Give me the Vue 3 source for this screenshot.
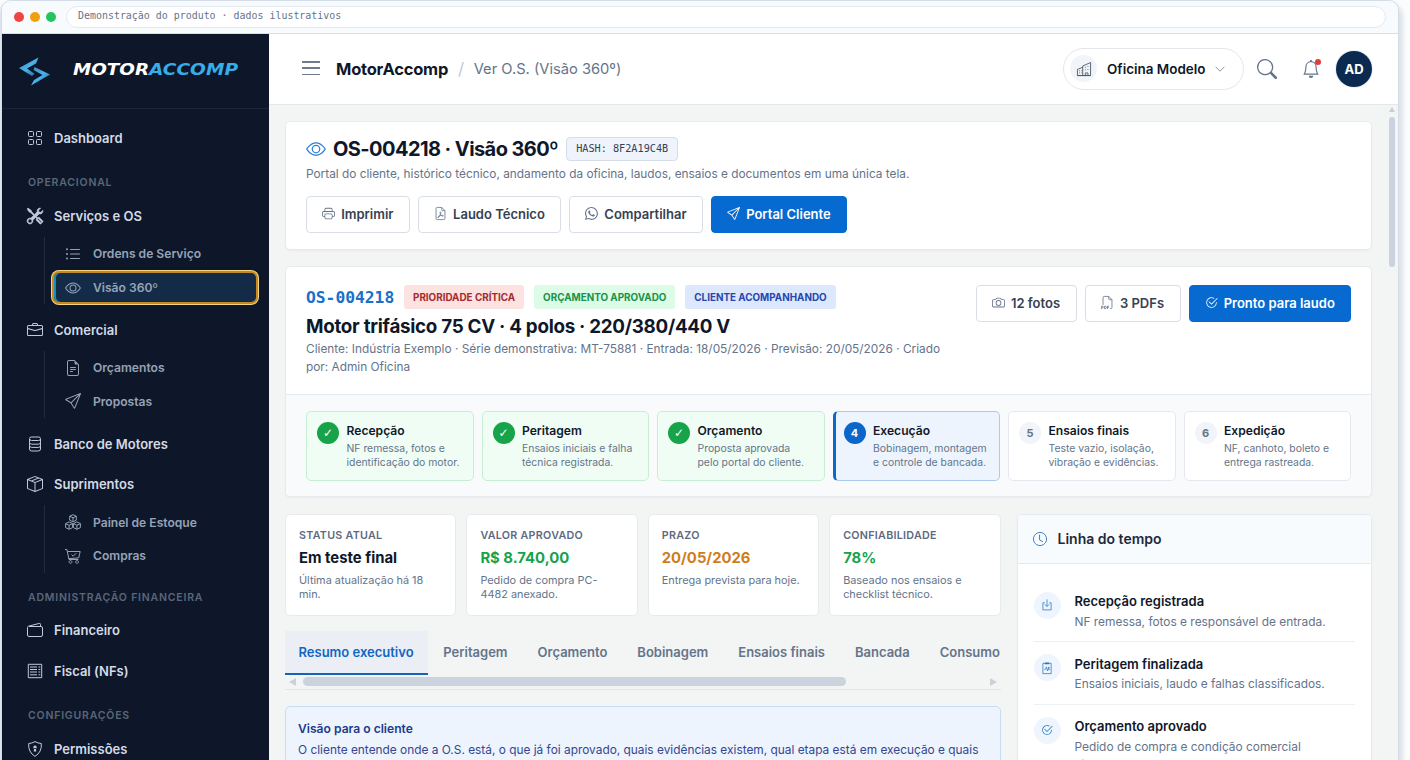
<script setup>
import { h } from 'vue'

const icons = {
  eye: { f: 'M16 8s-3-5.5-8-5.5S0 8 0 8s3 5.5 8 5.5S16 8 16 8M1.173 8a13 13 0 0 1 1.66-2.043C4.12 4.668 5.88 3.5 8 3.5s3.879 1.168 5.168 2.457A13 13 0 0 1 14.828 8q-.086.13-.195.288c-.335.48-.83 1.12-1.465 1.755C11.879 11.332 10.119 12.5 8 12.5s-3.879-1.168-5.168-2.457A13 13 0 0 1 1.172 8zM8 5.5a2.5 2.5 0 1 0 0 5 2.5 2.5 0 0 0 0-5M4.5 8a3.5 3.5 0 1 1 7 0 3.5 3.5 0 0 1-7 0' },
  grid: { s: 'M2.5 1.5h3a1 1 0 0 1 1 1v3a1 1 0 0 1-1 1h-3a1 1 0 0 1-1-1v-3a1 1 0 0 1 1-1zM10.500 1.500h3a1 1 0 0 1 1 1v3a1 1 0 0 1-1 1h-3a1 1 0 0 1-1-1v-3a1 1 0 0 1 1-1zM2.500 9.500h3a1 1 0 0 1 1 1v3a1 1 0 0 1-1 1h-3a1 1 0 0 1-1-1v-3a1 1 0 0 1 1-1zM10.500 9.500h3a1 1 0 0 1 1 1v3a1 1 0 0 1-1 1h-3a1 1 0 0 1-1-1v-3a1 1 0 0 1 1-1z' },
  tools: { f: 'M1 0 0 1l2.2 3.081a1 1 0 0 0 .815.419h.07a1 1 0 0 1 .708.293l2.675 2.675-2.617 2.654A3.003 3.003 0 0 0 0 13a3 3 0 1 0 5.878-.851l2.654-2.617.968.968-.305.914a1 1 0 0 0 .242 1.023l3.27 3.27a.997.997 0 0 0 1.414 0l1.586-1.586a.997.997 0 0 0 0-1.414l-3.27-3.27a1 1 0 0 0-1.023-.242L10.5 9.5l-.96-.96 2.68-2.643A3.005 3.005 0 0 0 16 3q0-.405-.102-.777l-2.14 2.141L12 4l-.364-1.757L13.777.102a3 3 0 0 0-3.675 3.68L7.462 6.46 4.793 3.793a1 1 0 0 1-.293-.707v-.071a1 1 0 0 0-.419-.814zm9.646 10.646a.5.5 0 0 1 .708 0l2.914 2.915a.5.5 0 0 1-.707.707l-2.915-2.914a.5.5 0 0 1 0-.708M3 11l.471.242.529.026.287.445.445.287.026.529L5 13l-.242.471-.026.529-.445.287-.287.445-.529.026L3 15l-.471-.242L2 14.732l-.287-.445L1.268 14l-.026-.529L1 13l.242-.471.026-.529.445-.287.287-.445.529-.026z', w: 0.5 },
  list: { f: 'M5 12.5a.5.5 0 0 1 .5-.5h9a.5.5 0 0 1 0 1h-9a.5.5 0 0 1-.5-.5m0-4.500a.5.5 0 0 1 .5-.5h9a.5.5 0 0 1 0 1h-9a.5.5 0 0 1-.5-.5m0-4.500a.5.5 0 0 1 .5-.5h9a.5.5 0 0 1 0 1h-9a.5.5 0 0 1-.5-.5m-3 .8a1 1 0 1 0 0-2 1 1 0 0 0 0 2m0 4.600a1 1 0 1 0 0-2 1 1 0 0 0 0 2m0 4.600a1 1 0 1 0 0-2 1 1 0 0 0 0 2' },
  briefcase: { f: 'M6.5 1A1.5 1.5 0 0 0 5 2.5V3H1.5A1.5 1.5 0 0 0 0 4.5v8A1.5 1.5 0 0 0 1.5 14h13a1.5 1.5 0 0 0 1.5-1.5v-8A1.5 1.5 0 0 0 14.5 3H11v-.5A1.5 1.5 0 0 0 9.5 1zm0 1h3a.5.5 0 0 1 .5.5V3H6v-.5a.5.5 0 0 1 .5-.5m1.886 6.914L15 7.151V12.5a.5.5 0 0 1-.5.5h-13a.5.5 0 0 1-.5-.5V7.15l6.614 1.764a1.5 1.5 0 0 0 .772 0M1.5 4h13a.5.5 0 0 1 .5.5v1.616L8.129 7.948a.5.5 0 0 1-.258 0L1 6.116V4.5a.5.5 0 0 1 .5-.5' },
  doc: { f: 'M5.5 7a.5.5 0 0 0 0 1h5a.5.5 0 0 0 0-1zM5 9.5a.5.5 0 0 1 .5-.5h5a.5.5 0 0 1 0 1h-5a.5.5 0 0 1-.5-.5m0 2a.5.5 0 0 1 .5-.5h2a.5.5 0 0 1 0 1h-2a.5.5 0 0 1-.5-.5M9.5 0H4a2 2 0 0 0-2 2v12a2 2 0 0 0 2 2h8a2 2 0 0 0 2-2V4.5zm0 1v2A1.5 1.5 0 0 0 11 4.5h2V14a1 1 0 0 1-1 1H4a1 1 0 0 1-1-1V2a1 1 0 0 1 1-1z' },
  send: { f: 'M15.854.146a.5.5 0 0 1 .11.54l-5.819 14.547a.75.75 0 0 1-1.329.124l-3.178-4.995L.643 7.184a.75.75 0 0 1 .124-1.33L15.314.037a.5.5 0 0 1 .54.11ZM6.636 10.07l2.761 4.338L14.13 2.576zm6.787-8.201L1.591 6.602l4.339 2.76z' },
  database: { s: 'M4.500 1h7q2 0 2 1.400v.4q0 1.700-2 1.700h-7q-2 0-2-1.700v-.4q0-1.400 2-1.400zM2.500 3v3.300q0 1.900 2.200 1.900h6.600q2.200 0 2.200-1.900V3M2.500 6.300v3.200q0 1.900 2.200 1.900h6.600q2.200 0 2.200-1.900v-3.200M2.500 9.500v3.500q0 2 2.200 2h6.600q2.200 0 2.200-2v-3.500' },
  box: { f: 'M8.186 1.113a.5.5 0 0 0-.372 0L1.846 3.5l2.404.961L10.404 2zm3.564 1.426L5.596 5 8 5.961 14.154 3.5zm3.25 1.7-6.5 2.6v7.922l6.5-2.6V4.24zM7.5 14.762V6.838L1 4.239v7.923zM7.443.184a1.5 1.5 0 0 1 1.114 0l7.129 2.852A.5.5 0 0 1 16 3.5v8.662a1 1 0 0 1-.629.928l-7.185 2.874a.5.5 0 0 1-.372 0L.63 13.09a1 1 0 0 1-.63-.928V3.5a.5.5 0 0 1 .314-.464z' },
  boxes: { s: 'M8 .7l3.300 1.500v4L8 7.900 4.700 6.200v-4zM4.700 2.200 8 3.800l3.300-1.600M8 3.800v4M4.100 7.900l3.500 1.700v4l-3.500 1.700-3.500-1.700v-4zM.6 9.600l3.500 1.700 3.500-1.700M4.100 11.300v4M11.900 7.900l3.500 1.700v4l-3.500 1.700-3.500-1.700v-4zM8.400 9.600l3.500 1.700 3.500-1.700M11.900 11.300v4' },
  cart: { s: 'M0 1.500h1.900l2.100 10h9.300M2.600 3.500h12.600l-1.500 6.400-10 .7M6.500 6.500l1.700 1.700 3-3M5.500 12.500a1.400 1.400 0 1 0 .01 0zM12 12.500a1.400 1.400 0 1 0 .01 0z' },
  wallet: { s: 'M2 4.500h12a1.500 1.500 0 0 1 1.500 1.500v7a1.500 1.500 0 0 1-1.500 1.500H2A1.500 1.500 0 0 1 .5 13V5.500q0-1 1-1.300L12.300 1.400q1.200-.2 1.200 1v2' },
  fiscal: { s: 'M1.300 1.300h13.400v13.400H1.300zM3 4h7M3 6.500h7M3 9h7M3 11.800h7M11.500 4h1.800M11.500 6.500h1.800M11.500 9h1.800M11.500 11.800h1.800' },
  shield: { s: 'M8 .6q3 1.700 6.300 1.900.8 8.500-6.300 12.900Q.9 11 1.700 2.500 5 2.300 8 .6z', d: 'M8 4.600a1.700 1.700 0 1 0 .01 0zM7.200 7h1.600l.5 3.500H6.700z' },
  printer: { f: 'M2.5 8a.5.5 0 1 0 0-1 .5.5 0 0 0 0 1M5 1a2 2 0 0 0-2 2v2H2a2 2 0 0 0-2 2v3a2 2 0 0 0 2 2h1v1a2 2 0 0 0 2 2h6a2 2 0 0 0 2-2v-1h1a2 2 0 0 0 2-2V7a2 2 0 0 0-2-2h-1V3a2 2 0 0 0-2-2zM4 3a1 1 0 0 1 1-1h6a1 1 0 0 1 1 1v2H4zm1 5a2 2 0 0 0-2 2v1H2a1 1 0 0 1-1-1V7a1 1 0 0 1 1-1h12a1 1 0 0 1 1 1v3a1 1 0 0 1-1 1h-1v-1a2 2 0 0 0-2-2zm7 2v3a1 1 0 0 1-1 1H5a1 1 0 0 1-1-1v-3a1 1 0 0 1 1-1h6a1 1 0 0 1 1 1' },
  pdf: { s: 'M9.500.5H4A1.500 1.500 0 0 0 2.500 2v12A1.500 1.500 0 0 0 4 15.500h8a1.500 1.500 0 0 0 1.500-1.500V4.500zv3a1 1 0 0 0 1 1h3M8 6c-1 0-.5 2 .2 3.300.8 1.400 2.500 2.500 3.200 1.800.5-.9-2.400-1-4.400-.3-1.700.6-2.900 1.900-2.200 2.300.9.300 2.200-2 2.900-3.800C8.300 7.800 8.700 6 8 6z' },
  whatsapp: { f: 'M13.601 2.326A7.85 7.85 0 0 0 7.994 0C3.627 0 .068 3.558.064 7.926c0 1.399.366 2.76 1.057 3.965L0 16l4.204-1.102a7.9 7.9 0 0 0 3.79.965h.004c4.368 0 7.926-3.558 7.93-7.93A7.9 7.9 0 0 0 13.6 2.326zM7.994 14.521a6.6 6.6 0 0 1-3.356-.92l-.24-.144-2.494.654.666-2.433-.156-.251a6.56 6.56 0 0 1-1.007-3.505c0-3.626 2.957-6.584 6.591-6.584a6.56 6.56 0 0 1 4.66 1.931 6.56 6.56 0 0 1 1.928 4.66c-.004 3.639-2.961 6.592-6.592 6.592m3.615-4.934c-.197-.099-1.17-.578-1.353-.646-.182-.065-.315-.099-.445.099-.133.197-.513.646-.627.775-.114.133-.232.148-.43.05-.197-.1-.836-.308-1.592-.985-.59-.525-.985-1.175-1.103-1.372-.114-.198-.011-.304.088-.403.087-.088.197-.232.296-.346.1-.114.133-.198.198-.33.065-.134.034-.248-.015-.347-.05-.099-.445-1.076-.612-1.47-.16-.389-.323-.335-.445-.34-.114-.007-.247-.007-.38-.007a.73.73 0 0 0-.529.247c-.182.198-.691.677-.691 1.654s.71 1.916.81 2.049c.098.133 1.394 2.132 3.383 2.992.47.205.84.326 1.129.418.475.152.904.129 1.246.08.38-.058 1.171-.48 1.338-.943.164-.464.164-.86.114-.994-.05-.133-.182-.198-.38-.297' },
  camera: { f: 'M15 12a1 1 0 0 1-1 1H2a1 1 0 0 1-1-1V6a1 1 0 0 1 1-1h1.172a3 3 0 0 0 2.12-.879l.83-.828A1 1 0 0 1 6.827 3h2.344a1 1 0 0 1 .707.293l.828.828A3 3 0 0 0 12.828 5H14a1 1 0 0 1 1 1zM2 4a2 2 0 0 0-2 2v6a2 2 0 0 0 2 2h12a2 2 0 0 0 2-2V6a2 2 0 0 0-2-2h-1.172a2 2 0 0 1-1.414-.586l-.828-.828A2 2 0 0 0 9.172 2H6.828a2 2 0 0 0-1.414.586l-.828.828A2 2 0 0 1 3.172 4zM8 11a2.5 2.5 0 1 1 0-5 2.5 2.5 0 0 1 0 5m0 1a3.5 3.5 0 1 0 0-7 3.5 3.5 0 0 0 0 7M3 6.5a.5.5 0 1 1-1 0 .5.5 0 0 1 1 0' },
  filepdf: { s: 'M2.500 11V2A1.500 1.500 0 0 1 4 .5h5.500l4 4V14a1.500 1.500 0 0 1-1.500 1.500h-1M9.500.5v3a1 1 0 0 0 1 1h3M.8 16v-3.500h1a1 1 0 0 1 0 2.100h-1M4.400 12.500v3.100h.6a1.500 1.500 0 0 0 0-3.100zM8 16v-3.500h2M8 14.200h1.700' },
  check: { f: 'M2.5 8a5.5 5.5 0 0 1 8.25-4.764.5.5 0 0 0 .5-.866A6.5 6.5 0 1 0 14.5 8a.5.5 0 0 0-1 0 5.5 5.5 0 1 1-11 0M15.354 3.354a.5.5 0 0 0-.708-.708L8 9.293 5.354 6.646a.5.5 0 1 0-.708.708l3 3a.5.5 0 0 0 .708 0z' },
  clock: { s: 'M8 .5a7.500 7.500 0 1 0 .01 0zM7.500 3v6l3.800 2.200' },
  inbox: { s: 'M5 5H2.500v9.500h11V5H11M8 .5v9.500M5 7l3 3 3-3' },
  pulse: { s: 'M5 1.800H2.500v13.700h11V1.800H11M4.500 10h1.300l1.400-3.500 1.600 5.500 1.700-5.500v3.500h1', d: 'M5 .5h6v2.600H5z' },
  buildings: { s: 'M6.500 15.500V4.600l9-4v14.900H.5V8.400l6-2.300M.5 15.500h15M9.500 15.500v-3h3v3M9 6h1M12 5h1M9 9h1M12 8.500h1M2.500 10h1M2.500 12.500h1M4.700 10h.6M4.700 12.500h.6' },
  chevron: { s: 'M1 4.500l7 7 7-7' },
  search: { f: 'M11.742 10.344a6.5 6.5 0 1 0-1.397 1.398h-.001q.044.06.098.115l3.85 3.85a1 1 0 0 0 1.415-1.414l-3.85-3.85a1 1 0 0 0-.115-.1zM12 6.5a5.5 5.5 0 1 1-11 0 5.5 5.5 0 0 1 11 0' },
  bell: { f: 'M8 16a2 2 0 0 0 2-2H6a2 2 0 0 0 2 2M8 1.918l-.797.161A4 4 0 0 0 4 6c0 .628-.134 2.197-.459 3.742-.16.767-.376 1.566-.663 2.258h10.244c-.287-.692-.502-1.49-.663-2.258C12.134 8.197 12 6.628 12 6a4 4 0 0 0-3.203-3.92zM14.22 12c.223.447.481.801.78 1H1c.299-.199.557-.553.78-1C2.68 10.2 3 6.88 3 6c0-2.42 1.72-4.44 4.005-4.901a1 1 0 1 1 1.99 0A5 5 0 0 1 13 6c0 .88.32 4.2 1.22 6' },
}

const Icon = (props) => {
  const i = icons[props.name]
  return h('svg', { viewBox: '0 0 16 16', width: props.size || 16, height: props.size || 16, overflow: 'visible' }, [
    i.f && h('path', { d: i.f, fill: 'currentColor', stroke: i.w ? 'currentColor' : 'none', 'stroke-width': i.w || 0 }),
    i.s && h('path', { d: i.s, fill: 'none', stroke: 'currentColor', 'stroke-width': 1 }),
    i.d && h('path', { d: i.d, fill: 'currentColor' }),
  ])
}
Icon.props = ['name', 'size']

const menu = [
  { icon: 'grid', label: 'Dashboard' },
  { heading: 'Operacional' },
  { icon: 'tools', label: 'Serviços e OS', subs: [{ icon: 'list', label: 'Ordens de Serviço' }, { icon: 'eye', label: 'Visão 360º', active: true }] },
  { icon: 'briefcase', label: 'Comercial', subs: [{ icon: 'doc', label: 'Orçamentos' }, { icon: 'send', label: 'Propostas' }] },
  { icon: 'database', label: 'Banco de Motores' },
  { icon: 'box', label: 'Suprimentos', last: true, subs: [{ icon: 'boxes', label: 'Painel de Estoque' }, { icon: 'cart', label: 'Compras' }] },
  { heading: 'Administração Financeira' },
  { icon: 'wallet', label: 'Financeiro' },
  { icon: 'fiscal', label: 'Fiscal (NFs)' },
  { heading: 'Configurações' },
  { icon: 'shield', label: 'Permissões' },
]
const stages = [
  { t: 'Recepção', a: 'NF remessa, fotos e', b: 'identificação do motor.', s: 'done' },
  { t: 'Peritagem', a: 'Ensaios iniciais e falha', b: 'técnica registrada.', s: 'done' },
  { t: 'Orçamento', a: 'Proposta aprovada', b: 'pelo portal do cliente.', s: 'done' },
  { t: 'Execução', a: 'Bobinagem, montagem', b: 'e controle de bancada.', s: 'current' },
  { t: 'Ensaios finais', a: 'Teste vazio, isolação,', b: 'vibração e evidências.', s: 'todo' },
  { t: 'Expedição', a: 'NF, canhoto, boleto e', b: 'entrega rastreada.', s: 'todo' },
]
const kpis = [
  { l: 'Status atual', v: 'Em teste final', n: 'Última atualização há 18 min.', c: 'dark' },
  { l: 'Valor aprovado', v: 'R$ 8.740,00', n: 'Pedido de compra PC-4482 anexado.', c: 'green' },
  { l: 'Prazo', v: '20/05/2026', n: 'Entrega prevista para hoje.', c: 'orange' },
  { l: 'Confiabilidade', v: '78%', n: 'Baseado nos ensaios e checklist técnico.', c: 'green' },
]
const tabs = ['Resumo executivo', 'Peritagem', 'Orçamento', 'Bobinagem', 'Ensaios finais', 'Bancada', 'Consumo']
const timeline = [
  { icon: 'inbox', t: 'Recepção registrada', n: 'NF remessa, fotos e responsável de entrada.' },
  { icon: 'pulse', t: 'Peritagem finalizada', n: 'Ensaios iniciais, laudo e falhas classificados.' },
  { icon: 'check', t: 'Orçamento aprovado', n: 'Pedido de compra e condição comercial vinculados.' },
]
</script>

<template>
  <div class="stage">
    <div class="window">
      <div class="chrome">
        <i class="dot red"></i><i class="dot amber"></i><i class="dot lime"></i>
        <div class="address">Demonstração do produto · dados ilustrativos</div>
      </div>
      <div class="body">
        <aside class="sidebar">
          <div class="brand">
            <svg class="mark" width="32" height="29" viewBox="0 0 32 29">
              <defs>
                <linearGradient id="lg" x1="0" y1="0" x2="1" y2="1"><stop offset="0" stop-color="#3d83a8" /><stop offset=".5" stop-color="#48b4ec" /><stop offset="1" stop-color="#28648d" /></linearGradient>
              </defs>
              <path d="M19.500.5 0 11l13 8 2.500-2.200-7.500-5.300 9-5z" fill="url(#lg)" />
              <path d="M12 28.500 31 17.500 15.500 10l-1 3 9 5-8.500 5z" fill="url(#lg)" />
            </svg>
            <svg class="word" width="168" height="18" viewBox="0 0 168 18">
              <text x="1" y="15" textLength="76" lengthAdjust="spacingAndGlyphs" fill="#fff">MOTOR</text>
              <text x="77" y="15" textLength="89" lengthAdjust="spacingAndGlyphs" fill="#38ace9">ACCOMP</text>
            </svg>
          </div>
          <nav>
            <template v-for="(m, i) in menu" :key="i">
              <div v-if="m.heading" class="heading">{{ m.heading }}</div>
              <template v-else>
                <div class="item"><Icon :name="m.icon" /><span>{{ m.label }}</span></div>
                <div v-if="m.subs" class="subs" :class="{ last: m.last }">
                  <div v-for="s in m.subs" :key="s.label" class="sub" :class="{ active: s.active }"><Icon :name="s.icon" /><span>{{ s.label }}</span></div>
                </div>
              </template>
            </template>
          </nav>
        </aside>
        <div class="main">
          <header class="topbar">
            <div class="burger"><i></i><i></i><i></i></div>
            <strong class="app">MotorAccomp</strong><span class="slash">/</span><span class="crumb">Ver O.S. (Visão 360º)</span>
            <div class="company"><span class="cicon"><Icon name="buildings" :size="14" /></span><b>Oficina Modelo</b><Icon name="chevron" :size="10" /></div>
            <Icon class="search" name="search" :size="20" />
            <div class="bell"><Icon name="bell" :size="18" /><i></i></div>
            <div class="avatar">AD</div>
          </header>
          <div class="scroll">
            <div class="content">
              <section class="card hero">
                <div class="title"><Icon name="eye" :size="20" /><h1>OS-004218 · Visão 360º</h1><code>HASH: 8F2A19C4B</code></div>
                <p>Portal do cliente, histórico técnico, andamento da oficina, laudos, ensaios e documentos em uma única tela.</p>
                <div class="buttons">
                  <button class="b1"><Icon name="printer" :size="13" />Imprimir</button>
                  <button class="b2"><Icon name="pdf" :size="13" />Laudo Técnico</button>
                  <button class="b3"><Icon name="whatsapp" :size="13" />Compartilhar</button>
                  <button class="b4 primary"><Icon name="send" :size="13" />Portal Cliente</button>
                </div>
              </section>

              <section class="card order">
                <div class="ohead">
                  <div class="oinfo">
                    <div class="chips"><span class="os">OS-004218</span><span class="chip r">Prioridade crítica</span><span class="chip g">Orçamento aprovado</span><span class="chip b">Cliente acompanhando</span></div>
                    <h2>Motor trifásico 75 CV · 4 polos · 220/380/440 V</h2>
                    <p>Cliente: Indústria Exemplo · Série demonstrativa: MT-75881 · Entrada: 18/05/2026 · Previsão: 20/05/2026 · Criado<br>por: Admin Oficina</p>
                  </div>
                  <div class="buttons">
                    <button class="b5"><Icon name="camera" :size="13" />12 fotos</button>
                    <button class="b6"><Icon name="filepdf" :size="13" />3 PDFs</button>
                    <button class="b7 primary"><Icon name="check" :size="13" />Pronto para laudo</button>
                  </div>
                </div>
                <div class="stages">
                  <div v-for="(s, i) in stages" :key="s.t" class="step" :class="s.s">
                    <span class="num"><template v-if="s.s === 'done'">✓</template><template v-else>{{ i + 1 }}</template></span>
                    <div><b>{{ s.t }}</b><small>{{ s.a }}<br>{{ s.b }}</small></div>
                  </div>
                </div>
              </section>

              <div class="cols">
                <div class="left">
                  <div class="kpis">
                    <div v-for="k in kpis" :key="k.l" class="kpi"><label>{{ k.l }}</label><strong :class="k.c">{{ k.v }}</strong><small>{{ k.n }}</small></div>
                  </div>
                  <div class="tabs"><span v-for="(t, i) in tabs" :key="t" :class="{ on: i === 0 }">{{ t }}</span></div>
                  <div class="hbar"><i class="al"></i><i class="thumb"></i><i class="ar"></i></div>
                  <div class="note"><b>Visão para o cliente</b><p>O cliente entende onde a O.S. está, o que já foi aprovado, quais evidências existem, qual etapa está em execução e quais</p></div>
                </div>
                <section class="card time">
                  <div class="thead"><Icon name="clock" :size="14" /><b>Linha do tempo</b></div>
                  <div class="tbody">
                    <div v-for="t in timeline" :key="t.t" class="event"><span class="bubble"><Icon :name="t.icon" :size="12" /></span><div><b>{{ t.t }}</b><p>{{ t.n }}</p></div></div>
                  </div>
                </section>
              </div>
            </div>
            <div class="vbar"><i class="up"></i><i class="vthumb"></i></div>
          </div>
        </div>
      </div>
    </div>
  </div>
</template>

<style>
body { margin: 0; overflow: hidden; background: #fbfcfd; }
</style>
<style scoped>
* { box-sizing: border-box; }
.stage { width: 1410px; height: 760px; overflow: hidden; padding-left: 1px; background: #fbfcfd; font-family: Inter, "Liberation Sans", sans-serif; color: #0f172a; }
svg { flex: none; display: block; }
h1, h2, p { margin: 0; }
.window { width: 1398px; height: 790px; border: 1px solid #d3dce7; border-radius: 10px 10px 0 0; overflow: hidden; box-shadow: 0 7px 4px 4px #dde3ea; background: #f3f4f4; }
.chrome { height: 33px; display: flex; align-items: center; background: #f8fbfe; border-bottom: 1px solid #d5deea; padding: 0 12px; }
.dot { width: 10px; height: 10px; border-radius: 50%; margin-right: 6px; flex: none; }
.red { background: #ef4444; } .amber { background: #f59e0b; } .lime { background: #22c55e; margin-right: 10px; }
.address { flex: 1; height: 22px; border: 1px solid #e4eaf1; border-radius: 11px; background: #fff; padding: 0 11px; font: 9.950px/17px "DejaVu Sans Mono", monospace; color: #64748b; white-space: nowrap; }
.body { display: flex; height: 757px; }
.sidebar { width: 267px; flex: none; background: #0e1729; }
.brand { height: 75px; border-bottom: 1px solid #1a2639; display: flex; align-items: center; padding: 0 0 2px 17px; }
.mark { margin-right: 21px; margin-top: 2px; }
.word { font: italic bold 16px "DejaVu Sans", sans-serif; margin-top: -3px; }
nav { padding-top: 8.500px; }
.item { height: 40.500px; display: flex; align-items: center; padding-left: 25px; gap: 11px; color: #d3dbe6; font-size: 13px; font-weight: 600; }
.item svg { color: #c0cad8; }
.heading { height: 37.500px; padding: 16px 0 0 26px; font-size: 10.500px; line-height: 17px; font-weight: 600; letter-spacing: .8px; color: #5a667a; text-transform: uppercase; white-space: nowrap; }
.subs { margin: 1px 0 5px 41.500px; padding-left: 7.500px; border-left: 1px solid #202c40; }
.subs.last { margin-bottom: 0; }
.sub { height: 33.700px; width: 206px; display: flex; align-items: center; padding-left: 13px; gap: 12px; color: #96a3b7; font-size: 12.100px; font-weight: 600; }
.sub.active { background: #142b47; border-radius: 7px; border: 2px solid #c28a25; box-shadow: 0 0 0 1px #f5d481, inset 2px 0 #178db3; padding-left: 11px; }
.main { flex: 1; min-width: 0; }
.topbar { height: 71px; background: #fff; border-bottom: 1px solid #e5e7ea; display: flex; align-items: center; padding: 0 26px 1px 33px; }
.burger { width: 18px; height: 14px; display: flex; flex-direction: column; justify-content: space-between; margin: -1px 16px 0 0; }
.burger i { height: 1.500px; background: #707c8c; }
.app { font-size: 16.500px; font-weight: 700; letter-spacing: -.22px; }
.slash { color: #c3cad3; font-size: 17px; margin: 0 9.500px 0 10px; }
.crumb { font-size: 14.700px; color: #64748b; }
.company { margin-left: auto; width: 181px; height: 42px; border: 1px solid #e3e7ec; border-radius: 21px; display: flex; align-items: center; padding-left: 6px; font-size: 13.450px; }
.company b { font-weight: 600; margin: 0 10px; white-space: nowrap; }
.company > svg { color: #475569; }
.cicon { width: 27px; height: 27px; border-radius: 50%; background: #f1f5f9; display: grid; place-items: center; color: #475569; }
.search { color: #64748b; margin-left: 13px; }
.bell { position: relative; color: #64748b; margin: 0 16px 0 25px; }
.bell i { position: absolute; top: -1px; right: -1px; width: 6px; height: 6px; border-radius: 50%; background: #e5393c; }
.avatar { width: 36px; height: 36px; border-radius: 50%; background: #0b2a50; color: #fff; display: grid; place-items: center; font-size: 13px; font-weight: 700; box-shadow: 0 0 0 1px #e8f0f8; }
.scroll { display: flex; height: 690px; background: #f3f4f4; }
.content { width: 1103px; padding: 15.500px 0 0 16px; }
.vbar { margin-left: auto; width: 9px; padding-top: 2px; }
.up { display: block; width: 0; margin-bottom: 5px; border: 3px solid transparent; border-top: 0; border-bottom: 5px solid #c7ced9; }
.vthumb { display: block; width: 6px; height: 150px; border-radius: 3px; background: #cbd2df; }
.card { background: #fff; border: 1px solid #e7eaee; border-radius: 5px; box-shadow: 0 1px 2px #0f172a0a; }
.hero { height: 129px; padding: 15px 20px; margin-bottom: 16.500px; }
.title { display: flex; align-items: center; height: 24px; }
.title svg { color: #2e82d6; margin-right: 7px; }
h1 { font-size: 20px; font-weight: 700; letter-spacing: -.58px; white-space: nowrap; }
code { margin-left: 8px; height: 24px; width: 112px; text-align: center; border: 1px solid #d5dde8; border-radius: 4px; background: #eff4fc; font: 10.200px/22px "DejaVu Sans Mono", monospace; color: #334155; white-space: nowrap; }
.hero p { font-size: 11.850px; line-height: 19px; color: #64748b; margin-top: 4px; white-space: nowrap; }
.buttons { display: flex; gap: 8px; }
.hero .buttons { margin-top: 12px; }
button { height: 37px; display: flex; align-items: center; justify-content: center; gap: 6px; border: 1px solid #d8dde6; border-radius: 4px; background: #fff; color: #374151; font: 600 13px Inter, sans-serif; padding: 0 0 1px; white-space: nowrap; }
button svg { color: #64748b; }
button.primary { background: #076ad0; border-color: #076ad0; color: #fff; }
button.primary svg { color: #fff; }
.b1 { width: 103.700px; } .b2 { width: 143.500px; } .b3 { width: 133.500px; } .b4 { width: 136.500px; }
.b5 { width: 101px; } .b6 { width: 96px; } .b7 { width: 162.500px; }
.order { height: 231px; margin-bottom: 16.500px; overflow: hidden; }
.ohead { height: 128px; padding: 17.500px 20px 0; display: flex; justify-content: space-between; border-bottom: 1px solid #e5e9ee; }
.chips { display: flex; height: 25px; align-items: center; }
.os { font: bold 16.300px "DejaVu Sans Mono", monospace; color: #1a6fc9; width: 98px; }
.chip { height: 24.500px; line-height: 24.500px; border-radius: 3px; font-size: 9.850px; font-weight: 700; padding: 0 9px; text-transform: uppercase; margin-right: 10px; white-space: nowrap; }
.chip.r { background: #fde2e2; color: #a52a2f; } .chip.g { background: #dcfce7; color: #18934a; } .chip.b { background: #dbe8fd; color: #2746ae; }
h2 { font-size: 18.800px; font-weight: 700; line-height: 24px; margin-top: 5px; letter-spacing: -.28px; white-space: nowrap; }
.oinfo p { font-size: 11.850px; line-height: 18.500px; color: #64748b; white-space: nowrap; margin-top: 1px; }
.stages { height: 102px; background: #f8fafc; padding: 16px 20px; display: grid; grid-template-columns: repeat(6, 1fr); gap: 8px; }
.step { height: 70px; border: 1px solid #e5e9ef; border-radius: 5px; background: #fff; display: flex; padding: 10px 0 0 10px; }
.step.done { background: #f0fdf4; border-color: #c5eed3; }
.step.current { background: #edf4fe; border-color: #a9cbee; border-left: 3px solid #0b69c7; padding-left: 8px; }
.num { width: 22px; height: 22px; border-radius: 50%; display: grid; place-items: center; margin-right: 7.500px; background: #f1f4f8; color: #64748b; font-size: 11px; font-weight: 700; flex: none; }
.done .num { background: #17a34a; color: #fff; font: bold 12px/22px "DejaVu Sans", sans-serif; }
.current .num { background: #0a66c9; color: #fff; }
.step b { display: block; font-size: 12.100px; font-weight: 600; line-height: 17px; margin-bottom: 3px; }
.step small { display: block; font-size: 10.400px; line-height: 14px; color: #64748b; white-space: nowrap; }
.cols { display: grid; grid-template-columns: 715.500px 355px; gap: 16px; }
.left { min-width: 0; }
.kpis { display: grid; grid-template-columns: repeat(4, 1fr); gap: 10px; }
.kpi { height: 102px; background: #fff; border: 1px solid #e7eaee; border-radius: 5px; padding: 12.500px 12px 0 13px; }
.kpi label { display: block; font-size: 10.700px; line-height: 17px; font-weight: 600; letter-spacing: .3px; color: #5c6a7f; text-transform: uppercase; }
.kpi strong { display: block; font-size: 14.850px; line-height: 20px; margin-top: 4px; }
.kpi small { display: block; font-size: 10.900px; line-height: 14px; color: #64748b; margin-top: 5px; }
.green { color: #16a34a; } .orange { color: #d07c1a; }
.tabs { height: 44px; margin-top: 15px; display: flex; overflow: hidden; }
.tabs span { padding: 0 15px; font-size: 13px; font-weight: 600; line-height: 42px; color: #64748b; white-space: nowrap; }
.tabs .on { background: #ebeff5; color: #1166c4; border-bottom: 2px solid #1464b8; padding: 0 14px 0 13.500px; margin-right: .7px; }
.hbar { height: 15px; border-bottom: 1px solid #e2e6ec; display: flex; align-items: center; padding: 0 4px; margin-bottom: 16.500px; }
.al { border: 4px solid transparent; border-left: 0; border-right: 7px solid #cbd1db; }
.thumb { width: 543px; height: 9px; border-radius: 5px; background: #ccd3df; margin-left: 7px; }
.ar { margin-left: auto; border: 4px solid transparent; border-right: 0; border-left: 7px solid #cbd1db; }
.note { height: 90px; border: 1px solid #c7dcf7; border-radius: 5px; background: #edf4fe; padding: 13px 12px; color: #1e3a8a; font-size: 12.100px; }
.note b { font-weight: 600; display: block; line-height: 17px; }
.note p { line-height: 19px; margin-top: 3px; font-size: 11.880px; white-space: nowrap; color: #34468f; }
.time { height: 300px; overflow: hidden; }
.thead { height: 49px; background: #f8fbfd; border-bottom: 1px solid #e4e9ef; display: flex; align-items: center; gap: 11px; padding-left: 15px; font-size: 14px; color: #1e293b; }
.thead svg { color: #1d6fc0; } .thead b { font-weight: 600; }
.tbody { padding: 16px 16px 0; }
.event { display: flex; height: 62.500px; padding-top: 12.500px; border-bottom: 1px solid #edf0f3; }
.bubble { width: 27px; height: 27px; border-radius: 50%; background: #eff5fd; color: #2474c6; display: grid; place-items: center; flex: none; margin: -.5px 14px 0 0; }
.event b { display: block; font-size: 13px; line-height: 18px; font-weight: 600; }
.event p { font-size: 11.900px; line-height: 18px; color: #64748b; margin-top: 2.500px; }
</style>
